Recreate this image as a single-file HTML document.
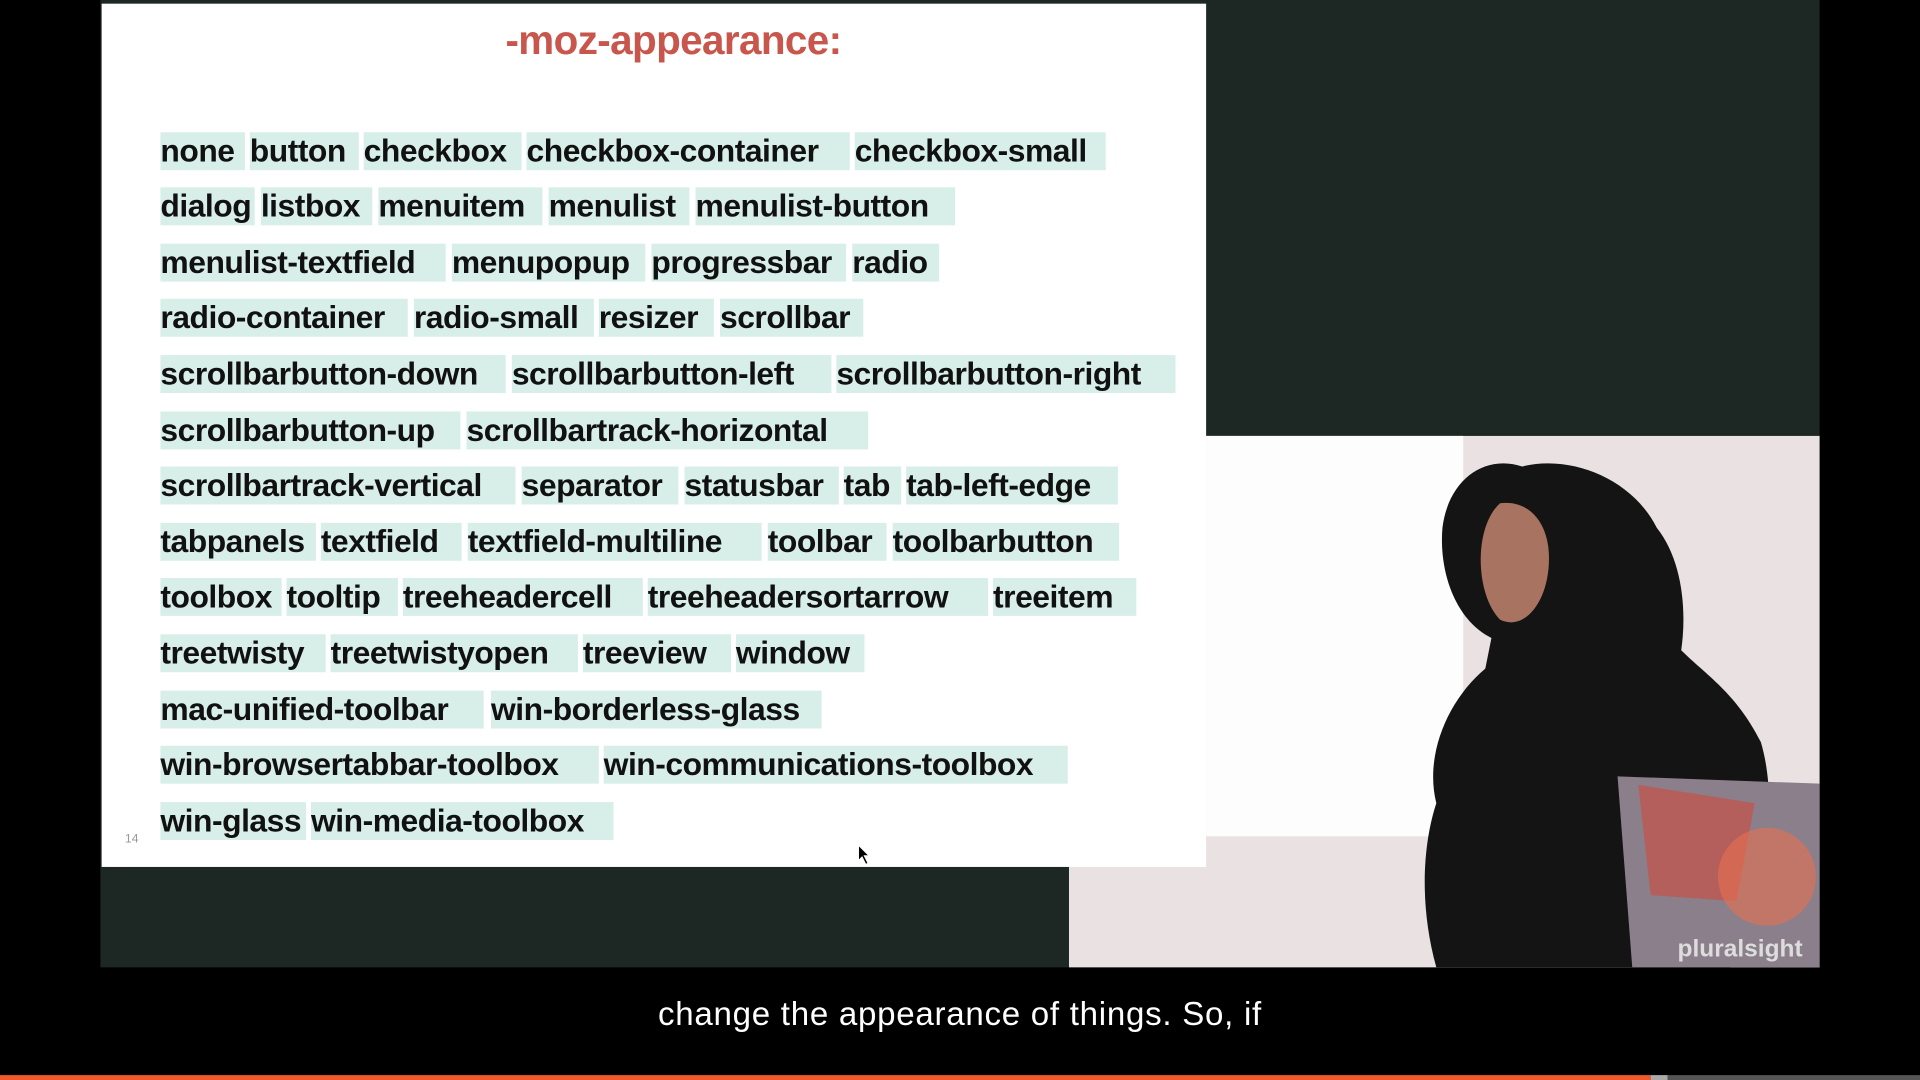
<!DOCTYPE html>
<html><head><meta charset="utf-8"><style>
html,body{margin:0;padding:0;background:#000;width:1920px;height:1080px;overflow:hidden}
#w{position:absolute;left:0;top:0;width:1568px;height:882px;transform:scale(1.22449);transform-origin:0 0;font-family:"Liberation Sans",sans-serif}
.a{position:absolute}
.b{position:absolute;height:31px;background:#d8efe9;color:#111;font-weight:bold;font-size:26px;line-height:31px;white-space:nowrap;letter-spacing:-0.4px;overflow:visible}
</style></head><body><div id="w">
<div class="a" style="left:82px;top:0;width:1404px;height:790px;background:#1d2723"></div>
<div class="a" style="left:873px;top:356px;width:613px;height:434px;background:#e9e1e2"></div>
<div class="a" style="left:985px;top:356px;width:210px;height:327px;background:#fdfdfe"></div>
<div class="a" style="left:83px;top:3px;width:902px;height:705px;background:#fff"></div>
<div class="a" style="left:380px;top:14px;width:340px;text-align:center;color:#c8564c;font-weight:bold;font-size:33px;letter-spacing:-0.5px">-moz-appearance:</div>
<div class="a" style="left:102px;top:680px;font-size:10px;color:#999">14</div>
<svg class="a" style="left:873px;top:356px" width="613" height="434" viewBox="0 0 613 434">
<path d="M370 25 C340 15 310 35 305 75 C302 110 315 150 345 165 L340 190 C310 215 290 260 300 300 C290 330 285 380 300 434 L540 434 C570 380 580 300 565 250 C545 210 520 195 500 175 C505 140 500 100 480 75 C460 35 410 15 370 25Z" fill="#141414"/>
<path d="M352 55 C330 75 332 130 352 150 C372 160 392 135 392 100 C392 70 375 52 352 55Z" fill="#a87360"/>
<path d="M448 278 L613 284 L613 434 L460 434 Z" fill="#8a7f8a"/>
<path d="M465 285 L560 300 L545 380 L475 375Z" fill="#d04a3c" opacity=".6"/>
<circle cx="570" cy="360" r="40" fill="#e87050" opacity=".6"/>
<text x="497" y="425" font-family="Liberation Sans" font-size="20" font-weight="bold" fill="#ddd">pluralsight</text>
</svg>
<svg class="a" style="left:700px;top:689px" width="12" height="18"><path d="M1 1 L1 14 L4 11 L7 17 L9 16 L6 10 L10 10 Z" fill="#000" stroke="#fff" stroke-width="1"/></svg>
<div class="a" style="left:0;top:813px;width:1568px;text-align:center;color:#fff;font-size:27px;letter-spacing:0.6px">change the appearance of things. So, if</div>
<div class="a" style="left:0;top:878px;width:1348px;height:4px;background:#f05a28"></div>
<div class="a" style="left:1348px;top:878px;width:14px;height:4px;background:#aaa"></div>
<div class="a" style="left:1362px;top:878px;width:206px;height:4px;background:#555"></div>
<div class="b" style="left:131px;top:108px;width:69px">none</div>
<div class="b" style="left:204px;top:108px;width:89px">button</div>
<div class="b" style="left:297px;top:108px;width:129px">checkbox</div>
<div class="b" style="left:430px;top:108px;width:264px">checkbox-container</div>
<div class="b" style="left:698px;top:108px;width:205px">checkbox-small</div>
<div class="b" style="left:131px;top:153px;width:77px">dialog</div>
<div class="b" style="left:213px;top:153px;width:91px">listbox</div>
<div class="b" style="left:309px;top:153px;width:134px">menuitem</div>
<div class="b" style="left:448px;top:153px;width:115px">menulist</div>
<div class="b" style="left:568px;top:153px;width:212px">menulist-button</div>
<div class="b" style="left:131px;top:199px;width:233px">menulist-textfield</div>
<div class="b" style="left:369px;top:199px;width:158px">menupopup</div>
<div class="b" style="left:532px;top:199px;width:159px">progressbar</div>
<div class="b" style="left:696px;top:199px;width:71px">radio</div>
<div class="b" style="left:131px;top:244px;width:202px">radio-container</div>
<div class="b" style="left:338px;top:244px;width:147px">radio-small</div>
<div class="b" style="left:489px;top:244px;width:94px">resizer</div>
<div class="b" style="left:588px;top:244px;width:117px">scrollbar</div>
<div class="b" style="left:131px;top:290px;width:282px">scrollbarbutton-down</div>
<div class="b" style="left:418px;top:290px;width:261px">scrollbarbutton-left</div>
<div class="b" style="left:683px;top:290px;width:277px">scrollbarbutton-right</div>
<div class="b" style="left:131px;top:336px;width:245px">scrollbarbutton-up</div>
<div class="b" style="left:381px;top:336px;width:328px">scrollbartrack-horizontal</div>
<div class="b" style="left:131px;top:381px;width:290px">scrollbartrack-vertical</div>
<div class="b" style="left:426px;top:381px;width:128px">separator</div>
<div class="b" style="left:559px;top:381px;width:126px">statusbar</div>
<div class="b" style="left:689px;top:381px;width:47px">tab</div>
<div class="b" style="left:740px;top:381px;width:173px">tab-left-edge</div>
<div class="b" style="left:131px;top:427px;width:127px">tabpanels</div>
<div class="b" style="left:262px;top:427px;width:115px">textfield</div>
<div class="b" style="left:382px;top:427px;width:240px">textfield-multiline</div>
<div class="b" style="left:627px;top:427px;width:97px">toolbar</div>
<div class="b" style="left:729px;top:427px;width:185px">toolbarbutton</div>
<div class="b" style="left:131px;top:472px;width:99px">toolbox</div>
<div class="b" style="left:234px;top:472px;width:91px">tooltip</div>
<div class="b" style="left:329px;top:472px;width:196px">treeheadercell</div>
<div class="b" style="left:529px;top:472px;width:278px">treeheadersortarrow</div>
<div class="b" style="left:811px;top:472px;width:117px">treeitem</div>
<div class="b" style="left:131px;top:518px;width:135px">treetwisty</div>
<div class="b" style="left:270px;top:518px;width:202px">treetwistyopen</div>
<div class="b" style="left:476px;top:518px;width:121px">treeview</div>
<div class="b" style="left:601px;top:518px;width:105px">window</div>
<div class="b" style="left:131px;top:564px;width:264px">mac-unified-toolbar</div>
<div class="b" style="left:401px;top:564px;width:270px">win-borderless-glass</div>
<div class="b" style="left:131px;top:609px;width:358px">win-browsertabbar-toolbox</div>
<div class="b" style="left:493px;top:609px;width:379px">win-communications-toolbox</div>
<div class="b" style="left:131px;top:655px;width:119px">win-glass</div>
<div class="b" style="left:254px;top:655px;width:247px">win-media-toolbox</div>
</div></body></html>
